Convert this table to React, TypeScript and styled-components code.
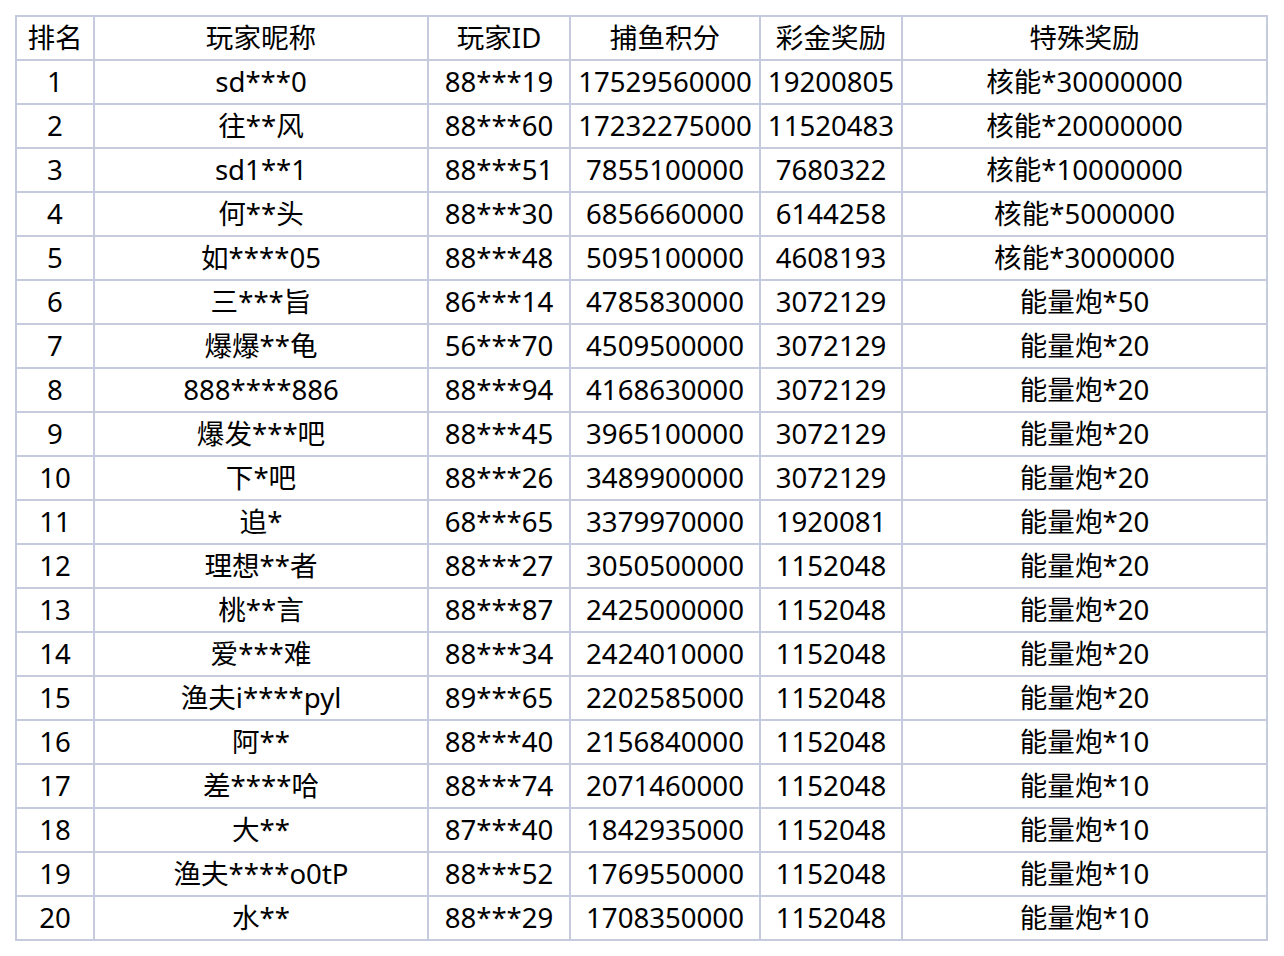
import React from "react";
import styled, { createGlobalStyle } from "styled-components";

const Global = createGlobalStyle`
  html, body { margin: 0; padding: 0; background: #ffffff; }
  body { font-family: "Noto Sans", "Noto Sans CJK SC", sans-serif; }
`;

const Page = styled.div`
  padding: 15px 0 0 15px;
`;

const Table = styled.table`
  border-collapse: collapse;
  table-layout: fixed;
  width: 1253px;
  font-family: "Noto Sans", "Noto Sans CJK SC", sans-serif;
  font-size: 27.6px;
  color: #000;
`;

const Cell = styled.td`
  border: 2px solid #c5cbdc;
  padding: 0 0 1px 0;
  text-align: center;
  vertical-align: middle;
  line-height: 41px;
  white-space: nowrap;
  overflow: hidden;
`;

const HeadCell = styled(Cell).attrs({ as: "th" })`
  font-weight: 400;
`;

const widths = [78, 334, 142, 190, 142, 365];
const headers = ["排名", "玩家昵称", "玩家ID", "捕鱼积分", "彩金奖励", "特殊奖励"];

const rows: [string, string, string, string, string][] = [
  ["sd***0", "88***19", "17529560000", "19200805", "核能*30000000"],
  ["往**风", "88***60", "17232275000", "11520483", "核能*20000000"],
  ["sd1**1", "88***51", "7855100000", "7680322", "核能*10000000"],
  ["何**头", "88***30", "6856660000", "6144258", "核能*5000000"],
  ["如****05", "88***48", "5095100000", "4608193", "核能*3000000"],
  ["三***旨", "86***14", "4785830000", "3072129", "能量炮*50"],
  ["爆爆**龟", "56***70", "4509500000", "3072129", "能量炮*20"],
  ["888****886", "88***94", "4168630000", "3072129", "能量炮*20"],
  ["爆发***吧", "88***45", "3965100000", "3072129", "能量炮*20"],
  ["下*吧", "88***26", "3489900000", "3072129", "能量炮*20"],
  ["追*", "68***65", "3379970000", "1920081", "能量炮*20"],
  ["理想**者", "88***27", "3050500000", "1152048", "能量炮*20"],
  ["桃**言", "88***87", "2425000000", "1152048", "能量炮*20"],
  ["爱***难", "88***34", "2424010000", "1152048", "能量炮*20"],
  ["渔夫i****pyl", "89***65", "2202585000", "1152048", "能量炮*20"],
  ["阿**", "88***40", "2156840000", "1152048", "能量炮*10"],
  ["差****哈", "88***74", "2071460000", "1152048", "能量炮*10"],
  ["大**", "87***40", "1842935000", "1152048", "能量炮*10"],
  ["渔夫****o0tP", "88***52", "1769550000", "1152048", "能量炮*10"],
  ["水**", "88***29", "1708350000", "1152048", "能量炮*10"],
];

export default function App() {
  return (
    <Page>
      <Global />
      <Table>
        <colgroup>
          {widths.map((w, i) => (
            <col key={i} style={{ width: w }} />
          ))}
        </colgroup>
        <thead>
          <tr>
            {headers.map((h) => (
              <HeadCell key={h}>{h}</HeadCell>
            ))}
          </tr>
        </thead>
        <tbody>
          {rows.map((r, i) => (
            <tr key={i}>
              <Cell>{i + 1}</Cell>
              {r.map((c, j) => (
                <Cell key={j}>{c}</Cell>
              ))}
            </tr>
          ))}
        </tbody>
      </Table>
    </Page>
  );
}
